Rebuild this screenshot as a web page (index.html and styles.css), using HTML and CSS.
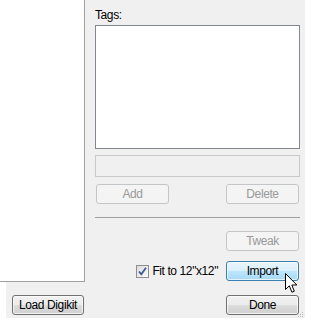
FILE: index.html
```html
<!DOCTYPE html>
<html lang="en">
<head>
    <meta charset="UTF-8">
    <title>Tags</title>
    <link rel="stylesheet" href="styles.css">
</head>
<body>
    <div class="dialog">
        <div class="main">
            <div class="preview"></div>
            <div class="side">
                <label class="caption">Tags:</label>
                <div class="listbox"></div>
                <div class="textbox"></div>
                <div class="row split">
                    <button class="btn" disabled>Add</button>
                    <button class="btn" disabled>Delete</button>
                </div>
                <div class="sep"></div>
                <div class="row end tweak-row">
                    <button class="btn" disabled>Tweak</button>
                </div>
                <div class="row end import-row">
                    <label class="check">
                        <span class="box">
                            <svg width="11" height="11" viewBox="0 0 11 11">
                                <path d="M2 5.5 L4.3 8.3 L9 1.8" fill="none" stroke="#3d5a98" stroke-width="1.8"/>
                            </svg>
                        </span>
                        Fit to 12"x12"
                    </label>
                    <span class="hot-wrap">
                        <button class="btn hot">Import</button>
                        <svg class="cursor" width="13" height="21" viewBox="0 0 13 21">
                            <path d="M0.5 0.5 L0.5 16.5 L4.3 12.8 L6.9 19.2 L9.3 18.2 L6.8 12 L11.8 12 Z" fill="#fff" stroke="#000" stroke-width="1"/>
                        </svg>
                    </span>
                </div>
            </div>
        </div>
        <div class="footer">
            <button class="btn">Load Digikit</button>
            <button class="btn">Done</button>
        </div>
        <svg class="grip" width="6" height="6" viewBox="0 0 6 6">
            <rect x="4" y="0" width="1" height="1" fill="#b8b8b8"/>
            <rect x="2" y="2" width="1" height="1" fill="#b8b8b8"/>
            <rect x="4" y="2" width="1" height="1" fill="#b8b8b8"/>
            <rect x="0" y="4" width="1" height="1" fill="#b8b8b8"/>
            <rect x="2" y="4" width="1" height="1" fill="#b8b8b8"/>
            <rect x="4" y="4" width="1" height="1" fill="#b8b8b8"/>
        </svg>
    </div>
</body>
</html>
```

FILE: styles.css
```css
body {
    margin: 0;
    background: #fff;
    font-family: "Liberation Sans", Arial, sans-serif;
    font-size: 12px;
    letter-spacing: -0.4px;
    color: #000;
}
.dialog {
    position: relative;
    margin: 4px 7px 0 6px;
    height: 318px;
    background: #f0f0f0;
}
.main {
    display: flex;
    margin: -4px 0 0 -6px;
}
.preview {
    width: 84px;
    height: 281px;
    background: #fff;
    border-right: 1px solid #a0a0a0;
    border-bottom: 1px solid #a0a0a0;
}
.side {
    flex: 1;
    display: flex;
    flex-direction: column;
    padding: 0 5px 0 10px;
}
.caption {
    margin-top: 8px;
    line-height: 14px;
}
.listbox {
    margin-top: 3px;
    height: 122px;
    background: #fff;
    border: 1px solid #828790;
}
.textbox {
    margin-top: 6px;
    height: 20px;
    background: #f0f0f0;
    border: 1px solid #c9c9c9;
}
.row {
    display: flex;
    align-items: center;
    padding: 0 1px;
}
.split {
    justify-content: space-between;
    margin-top: 7px;
}
.end {
    justify-content: flex-end;
}
.sep {
    margin-top: 13px;
    height: 1px;
    background: #a0a0a0;
}
.tweak-row {
    margin-top: 13px;
}
.import-row {
    margin-top: 10px;
}
.btn {
    width: 73px;
    height: 20px;
    padding: 0;
    font: inherit;
    letter-spacing: inherit;
    color: #000;
    border: 1px solid #707070;
    border-radius: 3px;
    background: linear-gradient(#f2f2f2 0%, #ebebeb 50%, #dddddd 51%, #cfcfcf 100%);
    box-shadow: inset 0 0 0 1px rgba(255, 255, 255, 0.7);
}
.btn:disabled {
    color: #999;
    border-color: #c3c6c8;
    background: #f4f4f4;
    box-shadow: none;
}
.hot {
    border-color: #3c7fb1;
    background: linear-gradient(#eaf6fd 0%, #d9f0fc 50%, #bee6fd 51%, #a7d9f5 100%);
}
.check {
    display: flex;
    align-items: center;
    margin-right: 8px;
}
.box {
    display: flex;
    align-items: center;
    justify-content: center;
    width: 11px;
    height: 11px;
    margin-right: 3px;
    border: 1px solid #8f8f8f;
    background: linear-gradient(135deg, #dcdcdc, #fbfbfb);
}
.hot-wrap {
    position: relative;
    display: flex;
}
.cursor {
    position: absolute;
    left: 59px;
    top: 12px;
}
.footer {
    display: flex;
    justify-content: space-between;
    margin-top: 13px;
    padding: 0 6px;
}
.footer .btn:first-child {
    width: 72px;
}
.grip {
    position: absolute;
    right: 1px;
    bottom: 0;
}
```
